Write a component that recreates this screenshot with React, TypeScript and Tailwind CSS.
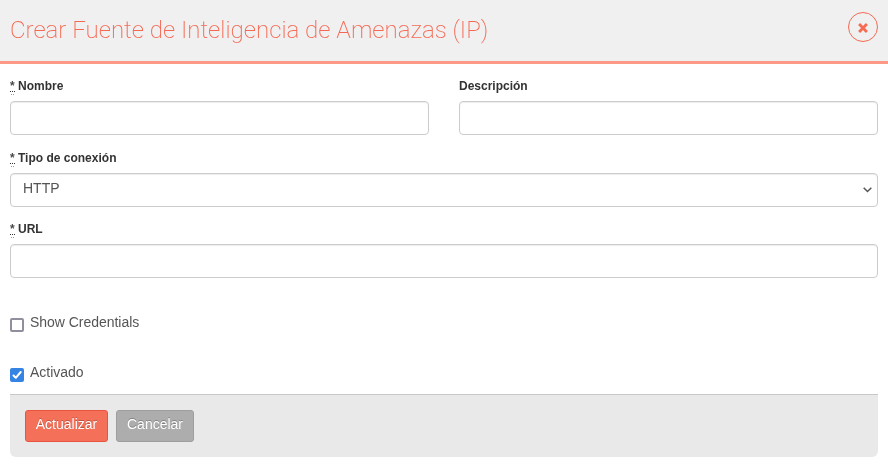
import { useState, type ReactNode } from "react";

const fieldBox =
  "block h-[34px] w-full rounded-[4px] border border-[#ccc] bg-white px-3 text-[14px] text-[#555] shadow-[inset_0_1px_1px_rgba(0,0,0,0.075)] outline-none";

function Field({ label, required, children }: { label: string; required?: boolean; children: ReactNode }) {
  return (
    <label className="block min-w-0 flex-1">
      <span className="mb-[5px] flex h-5 text-[12px] leading-5 font-bold text-[#333]">
        {required && (
          <abbr title="required" className="mr-[3px] flex w-[5px] flex-col no-underline">
            <span className="h-[15px] text-[#4a4a4a]">*</span>
            <span className="h-px bg-[repeating-linear-gradient(90deg,#333_0_1px,transparent_1px_2px)]" />
            <span className="mt-[2px] ml-[1px] h-px w-[3px] bg-[repeating-linear-gradient(90deg,#999_0_1px,transparent_1px_2px)]" />
          </abbr>
        )}
        {label}
      </span>
      {children}
    </label>
  );
}

function Check({ label, initial = false }: { label: string; initial?: boolean }) {
  const [on, setOn] = useState(initial);
  return (
    <label className="flex h-5 gap-[6px] text-[14px] leading-5 tracking-[-0.03px] text-[#555]">
      <input type="checkbox" className="sr-only" checked={on} onChange={() => setOn(!on)} />
      <span
        className={
          on
            ? "mt-[6px] flex h-[14px] w-[14px] items-center justify-center rounded-[2px] bg-[#3584e4]"
            : "mt-[6px] h-[14px] w-[14px] rounded-[2px] border-2 border-[#8f8f9d] bg-white"
        }
      >
        {on && (
          <svg width="14" height="14" viewBox="0 0 14 14" fill="none" stroke="white" strokeWidth="2" strokeLinecap="round" strokeLinejoin="round">
            <path d="M3.5 7.5 L5.8 9.8 L10.7 4" />
          </svg>
        )}
      </span>
      {label}
    </label>
  );
}

export default function App() {
  return (
    <div className="h-[464px] w-full overflow-hidden bg-white font-['Liberation_Sans',Arial,sans-serif]">
      <header className="flex h-16 items-start justify-between border-b-3 border-[#fb9886] bg-[#f0f0f0] px-[10px]">
        <h1 className="mt-[15px] font-[Roboto,sans-serif] text-[24px] leading-[30px] font-extralight whitespace-nowrap text-[#f56954] will-change-transform">
          Crear Fuente de Inteligencia de Amenazas (IP)
        </h1>
        <button
          aria-label="Cerrar"
          className="mt-3 flex h-[30px] w-[30px] items-center justify-center rounded-full border border-[#f46b52]"
        >
          <svg width="10" height="10" viewBox="0 0 10 10" className="mt-[2px]" stroke="#f46b52" strokeWidth="2.8">
            <path d="M1.1 1.1 L8.9 8.9 M8.9 1.1 L1.1 8.9" />
          </svg>
        </button>
      </header>
      <main className="px-[10px] pt-3 will-change-transform">
        <div className="mb-[13px] flex gap-[30px]">
          <Field label="Nombre" required>
            <input className={fieldBox} />
          </Field>
          <Field label="Descripción">
            <input className={fieldBox} />
          </Field>
        </div>
        <div className="mb-3 flex">
          <Field label="Tipo de conexión" required>
            <span className={`${fieldBox} flex justify-between pr-[5px]`}>
              <span className="leading-[28px]">HTTP</span>
              <svg width="9" height="6" viewBox="0 0 9 6" className="mt-[13px]" fill="none" stroke="#555" strokeWidth="1.5">
                <path d="M0.7 0.8 L4.5 4.5 L8.3 0.8" />
              </svg>
            </span>
          </Field>
        </div>
        <div className="flex">
          <Field label="URL" required>
            <input className={fieldBox} />
          </Field>
        </div>
        <div className="mt-[34px] flex flex-col gap-[30px]">
          <Check label="Show Credentials" />
          <Check label="Activado" initial />
        </div>
        <footer className="mt-3 flex h-[63px] gap-2 rounded-b-[6px] border-t border-[#c8c8c8] bg-[#e9e9e9] px-[15px] pt-[15px] text-[14px] text-white">
          <button className="h-8 w-[83px] rounded-[3px] border border-[#ea543e] bg-[#f47059] pb-[3px] [text-shadow:0_-1px_0_rgba(0,0,0,0.25)]">
            Actualizar
          </button>
          <button className="h-8 w-[78px] rounded-[3px] border border-[#9e9e9e] bg-[#adadad] pb-[3px] [text-shadow:0_-1px_0_rgba(0,0,0,0.25)]">
            Cancelar
          </button>
        </footer>
      </main>
    </div>
  );
}
